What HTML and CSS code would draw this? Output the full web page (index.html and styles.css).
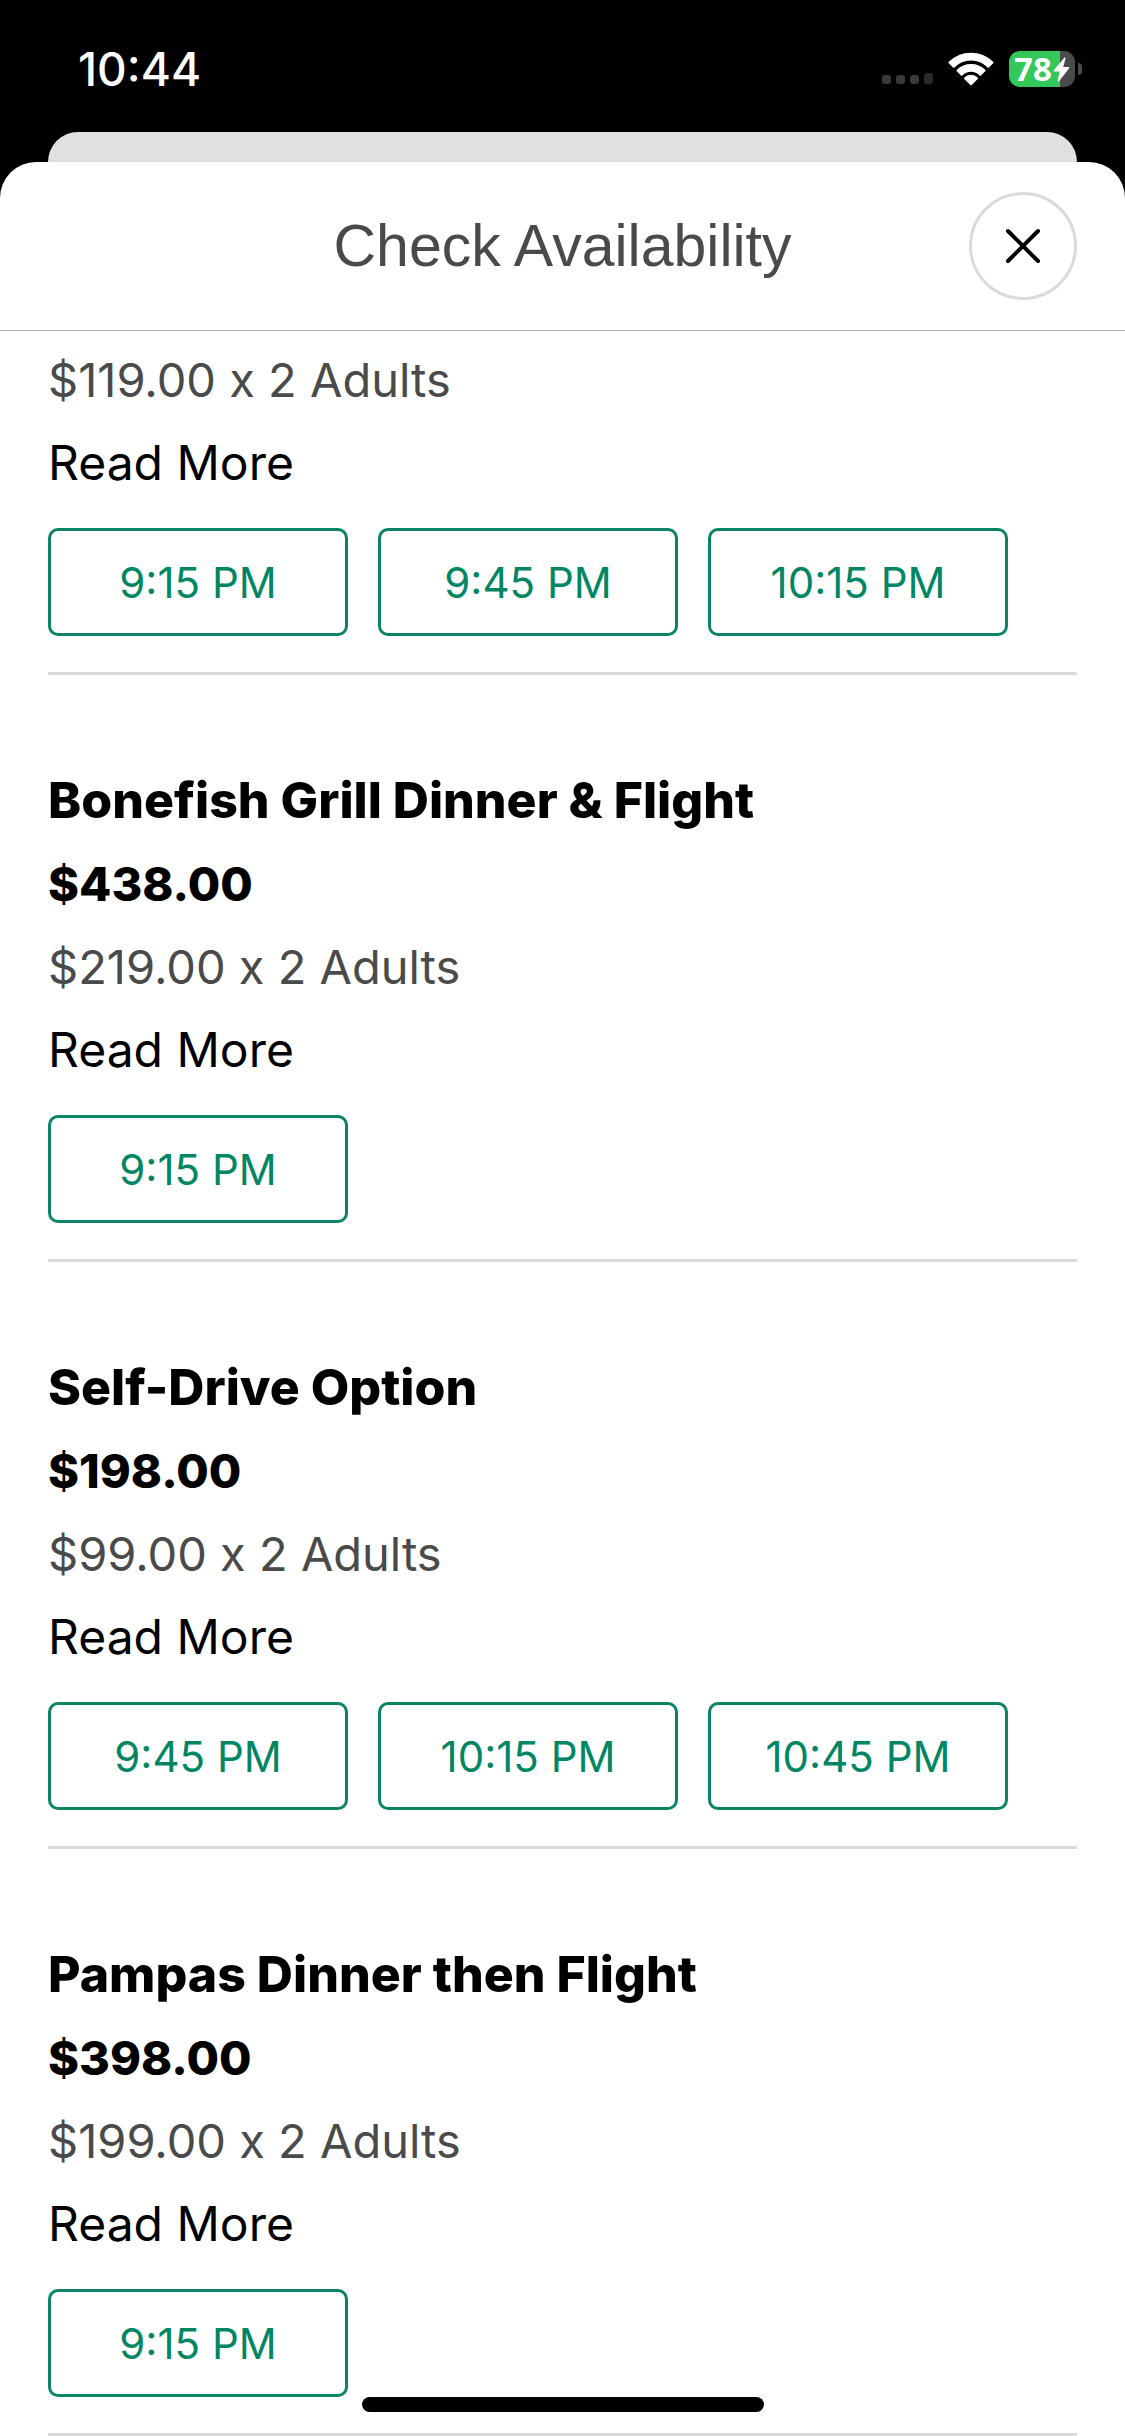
FILE: index.html
```html
<!DOCTYPE html>
<html lang="en">
<head>
<meta charset="utf-8">
<meta name="viewport" content="width=device-width, initial-scale=1">
<title>Check Availability</title>
<link rel="stylesheet" href="styles.css">
</head>
<body>
<div class="status-bar">
  <time class="clock">10:44</time>
  <div class="status-icons">
    <svg class="signal" width="51" height="12" viewBox="0 0 51 12" aria-hidden="true">
      <g fill="#3a3a3c"><rect x="0" y="2" width="9" height="9" rx="3"/><rect x="14" y="2" width="9" height="9" rx="3"/><rect x="28" y="2" width="9" height="9" rx="3"/></g>
      <rect x="42" y="0" width="9" height="11" rx="3" fill="#2a2a2c"/>
    </svg>
    <svg class="wifi" width="46" height="34" viewBox="0 0 46 34" aria-hidden="true">
      <g fill="#fff" stroke="#fff" stroke-width="2" stroke-linejoin="round">
        <path d="M1.500 10.500A30.500 30.500 0 0 1 44.500 10.500L40.300 14.700A24.500 24.500 0 0 0 5.700 14.700Z"/>
        <path d="M9.500 18.500A19.100 19.100 0 0 1 36.500 18.500L32.300 22.700A13.200 13.200 0 0 0 13.700 22.700Z"/>
        <path d="M17 26.300A8.500 8.500 0 0 1 29 26.300L23 32.300Z"/>
      </g>
    </svg>
    <div class="battery">
      <span class="battery-level">78</span>
      <svg class="bolt" width="17" height="25" viewBox="0 0 17 25" aria-hidden="true"><path fill="#fff" d="M11.500 0.500L0.800 13.300Q0.300 14.500 1.500 14.500H6.800L4.600 23.800Q5 25 6.200 24L16.200 11.200Q16.700 10 15.500 10H10.200L12.600 1.200Q12.300 0 11.500 0.500Z"/></svg>
    </div>
    <span class="battery-cap"></span>
  </div>
</div>
<div class="backdrop"></div>
<main class="sheet">
  <header class="sheet-header">
    <h1 class="sheet-title">Check Availability</h1>
    <button class="close" type="button" aria-label="Close">
      <svg width="36" height="36" viewBox="0 0 36 36" fill="none" stroke="#000" stroke-width="4" stroke-linecap="round" aria-hidden="true"><path d="M3 3L33 33M33 3L3 33"/></svg>
    </button>
  </header>
  <div class="options">
    <section class="option option-continued">
      <p class="rate">$119.00 x 2 Adults</p>
      <a class="more" href="#">Read More</a>
      <div class="times"><button class="time" type="button">9:15 PM</button><button class="time" type="button">9:45 PM</button><button class="time" type="button">10:15 PM</button></div>
    </section>
    <section class="option">
      <h2 class="name">Bonefish Grill Dinner &amp; Flight</h2>
      <p class="price">$438.00</p>
      <p class="rate">$219.00 x 2 Adults</p>
      <a class="more" href="#">Read More</a>
      <div class="times"><button class="time" type="button">9:15 PM</button></div>
    </section>
    <section class="option">
      <h2 class="name">Self-Drive Option</h2>
      <p class="price">$198.00</p>
      <p class="rate">$99.00 x 2 Adults</p>
      <a class="more" href="#">Read More</a>
      <div class="times"><button class="time" type="button">9:45 PM</button><button class="time" type="button">10:15 PM</button><button class="time" type="button">10:45 PM</button></div>
    </section>
    <section class="option">
      <h2 class="name">Pampas Dinner then Flight</h2>
      <p class="price">$398.00</p>
      <p class="rate">$199.00 x 2 Adults</p>
      <a class="more" href="#">Read More</a>
      <div class="times"><button class="time" type="button">9:15 PM</button></div>
    </section>
  </div>
</main>
<div class="home-indicator"></div>
</body>
</html>
```
FILE: styles.css
```css
* {
  box-sizing: border-box;
}

body {
  margin: 0;
  background: #000;
  color: #000;
  font-family: Inter, "Liberation Sans", sans-serif;
  font-size: 48px;
  line-height: 83px;
}

h1, h2, p {
  margin: 0;
  font-size: inherit;
}

button {
  padding: 0;
  background: #fff;
  font-family: inherit;
  cursor: pointer;
}

.status-bar {
  display: flex;
  justify-content: space-between;
  align-items: center;
  height: 132px;
  padding: 6px 43px 0 78px;
}

.clock {
  color: #fff;
  font-size: 46px;
  font-weight: 500;
}

.status-icons {
  display: flex;
  align-items: center;
}

.signal {
  margin: 20px 15px 0 0;
}

.wifi {
  margin-right: 15px;
}

.battery {
  display: flex;
  align-items: center;
  justify-content: center;
  gap: 1px;
  width: 66px;
  height: 36px;
  border-radius: 11px;
  background: linear-gradient(to right, #34c759 77%, #4a4a4c 77%);
}

.battery-level {
  color: #fff;
  font-family: "Noto Sans", sans-serif;
  font-size: 33px;
  font-weight: 700;
  line-height: 36px;
}

.battery-cap {
  width: 4px;
  height: 12px;
  margin-left: 3px;
  border-radius: 0 6px 6px 0;
  background: #4a4a4c;
}

.backdrop {
  height: 60px;
  margin: 0 48px -30px;
  border-radius: 30px 30px 0 0;
  background: #e0e0e0;
}

.sheet {
  position: relative;
  border-radius: 36px 36px 0 0;
  background: #fff;
}

.sheet-header {
  display: grid;
  grid-template-columns: 108px 1fr 108px;
  align-items: center;
  padding: 30px 48px;
  border-bottom: 1px solid #b0b0b0;
}

.sheet-title {
  grid-column: 2;
  color: #4a4a4a;
  font-family: "Liberation Sans", Arial, sans-serif;
  font-size: 59px;
  font-weight: 400;
  text-align: center;
}

.close {
  display: flex;
  align-items: center;
  justify-content: center;
  height: 108px;
  border: 3px solid #dadada;
  border-radius: 50%;
}

.options {
  padding: 0 48px;
}

.option {
  padding: 84px 0 36px;
  border-bottom: 3px solid #d9d9d9;
}

.option-continued {
  padding-top: 7px;
}

.name,
.price {
  font-weight: 800;
}

.name {
  font-size: 50px;
}

.price {
  font-size: 47px;
}

.rate {
  color: #4a4a4a;
  font-size: 47px;
  font-feature-settings: "calt" 0;
}

.more {
  display: block;
  color: #000;
  text-decoration: none;
}

.times {
  display: flex;
  flex-wrap: wrap;
  gap: 30px;
  margin-top: 24px;
}

.time {
  width: 300px;
  height: 108px;
  border: 3px solid #0a8465;
  border-radius: 10px;
  color: #008663;
  font-size: 42px;
}

.home-indicator {
  position: fixed;
  bottom: 24px;
  left: 50%;
  width: 402px;
  height: 15px;
  margin-left: -201px;
  border-radius: 8px;
  background: #000;
}
```
